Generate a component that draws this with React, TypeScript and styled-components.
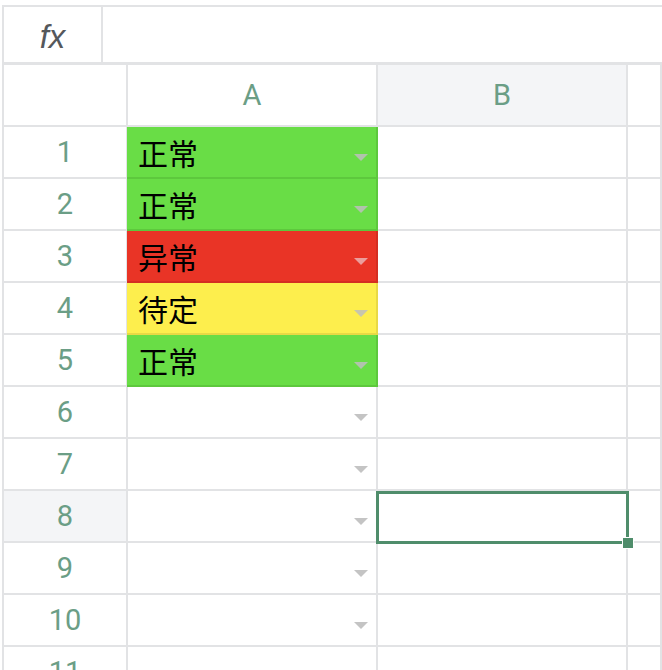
import React from 'react';
import styled, { createGlobalStyle } from 'styled-components';

const GlobalStyle = createGlobalStyle`
  html, body {
    margin: 0;
    padding: 0;
    background: #fff;
    overflow: hidden;
  }
  body {
    font-family: Roboto, "Noto Sans CJK SC", sans-serif;
  }
`;

const LINE = '#e2e3e5';
const HEAD_TEXT = '#6b9e86';
const HIGHLIGHT = '#f4f5f7';
const SELECT = '#4f8d6b';

type Fill = { bg: string; edge: string; arrow: string };

const fills: Record<string, Fill> = {
  正常: { bg: '#69dd46', edge: '#5dc83d', arrow: 'rgba(190, 190, 190, 0.85)' },
  异常: { bg: '#e93426', edge: '#d42e22', arrow: 'rgba(235, 170, 170, 0.9)' },
  待定: { bg: '#fdee4d', edge: '#e8d945', arrow: 'rgba(190, 190, 190, 0.85)' },
};

const Page = styled.div`
  padding: 5px 0 0 2px;
  height: 670px;
  box-sizing: border-box;
`;

const Sheet = styled.div`
  border-left: 2px solid ${LINE};
`;

const FormulaBar = styled.div`
  display: flex;
  height: 60px;
  box-sizing: border-box;
  border-top: 2px solid ${LINE};
  border-bottom: 3px solid ${LINE};
`;

const FxLabel = styled.div`
  width: 99px;
  border-right: 2px solid ${LINE};
  display: flex;
  align-items: center;
  justify-content: center;
  font-family: "Liberation Sans", Arial, sans-serif;
  font-style: italic;
  font-size: 33px;
  color: #55585c;
  padding-top: 5px;
  box-sizing: border-box;
`;

const Grid = styled.div`
  display: grid;
  grid-template-columns: 124px 250px 250px 1fr;
  grid-template-rows: 62px;
  grid-auto-rows: 52px;
`;

const HeaderCell = styled.div<{ $active?: boolean }>`
  box-sizing: border-box;
  border-right: 2px solid ${LINE};
  border-bottom: 2px solid ${LINE};
  background: ${(p) => (p.$active ? HIGHLIGHT : '#fff')};
  display: flex;
  align-items: center;
  justify-content: center;
  font-size: 29px;
  color: ${HEAD_TEXT};
`;

const Cell = styled.div<{ $fill?: Fill }>`
  position: relative;
  box-sizing: border-box;
  border-right: 2px solid ${(p) => (p.$fill ? p.$fill.edge : LINE)};
  border-bottom: 2px solid ${(p) => (p.$fill ? p.$fill.edge : LINE)};
  background: ${(p) => (p.$fill ? p.$fill.bg : '#fff')};
  display: flex;
  align-items: center;
  justify-content: space-between;
  padding: 0 8px 0 11px;
  margin-left: ${(p) => (p.$fill ? '-1px' : '0')};
`;

const CellText = styled.span`
  font-family: "Noto Sans CJK SC", sans-serif;
  font-size: 30px;
  color: #000;
  line-height: 1;
`;

const DropArrow = styled.span<{ $color?: string }>`
  width: 0;
  height: 0;
  margin-top: 10px;
  margin-left: auto;
  border-left: 7px solid transparent;
  border-right: 7px solid transparent;
  border-top: 7px solid ${(p) => p.$color || '#c4c4c4'};
`;

const Selection = styled.div`
  position: absolute;
  z-index: 5;
  left: -2px;
  top: 0;
  right: -3px;
  bottom: -3px;
  border: 3px solid ${SELECT};
  pointer-events: none;
`;

const Handle = styled.div`
  position: absolute;
  right: -8px;
  bottom: -8px;
  width: 10px;
  height: 10px;
  background: ${SELECT};
  border: 1px solid #fff;
`;

const values: (string | null)[] = ['正常', '正常', '异常', '待定', '正常', null, null, null, null, null, null];
const selectedRow = 8;

export default function App() {
  return (
    <Page>
      <GlobalStyle />
      <Sheet>
        <FormulaBar>
          <FxLabel>fx</FxLabel>
        </FormulaBar>
        <Grid>
          <HeaderCell />
          <HeaderCell>A</HeaderCell>
          <HeaderCell $active>B</HeaderCell>
          <HeaderCell />
          {values.map((v, i) => {
            const row = i + 1;
            const fill = v ? fills[v] : undefined;
            return (
              <React.Fragment key={row}>
                <HeaderCell $active={row === selectedRow}>{row}</HeaderCell>
                <Cell $fill={fill}>
                  {v && <CellText>{v}</CellText>}
                  <DropArrow $color={fill?.arrow} />
                </Cell>
                <Cell>
                  {row === selectedRow && (
                    <Selection>
                      <Handle />
                    </Selection>
                  )}
                </Cell>
                <Cell />
              </React.Fragment>
            );
          })}
        </Grid>
      </Sheet>
    </Page>
  );
}
